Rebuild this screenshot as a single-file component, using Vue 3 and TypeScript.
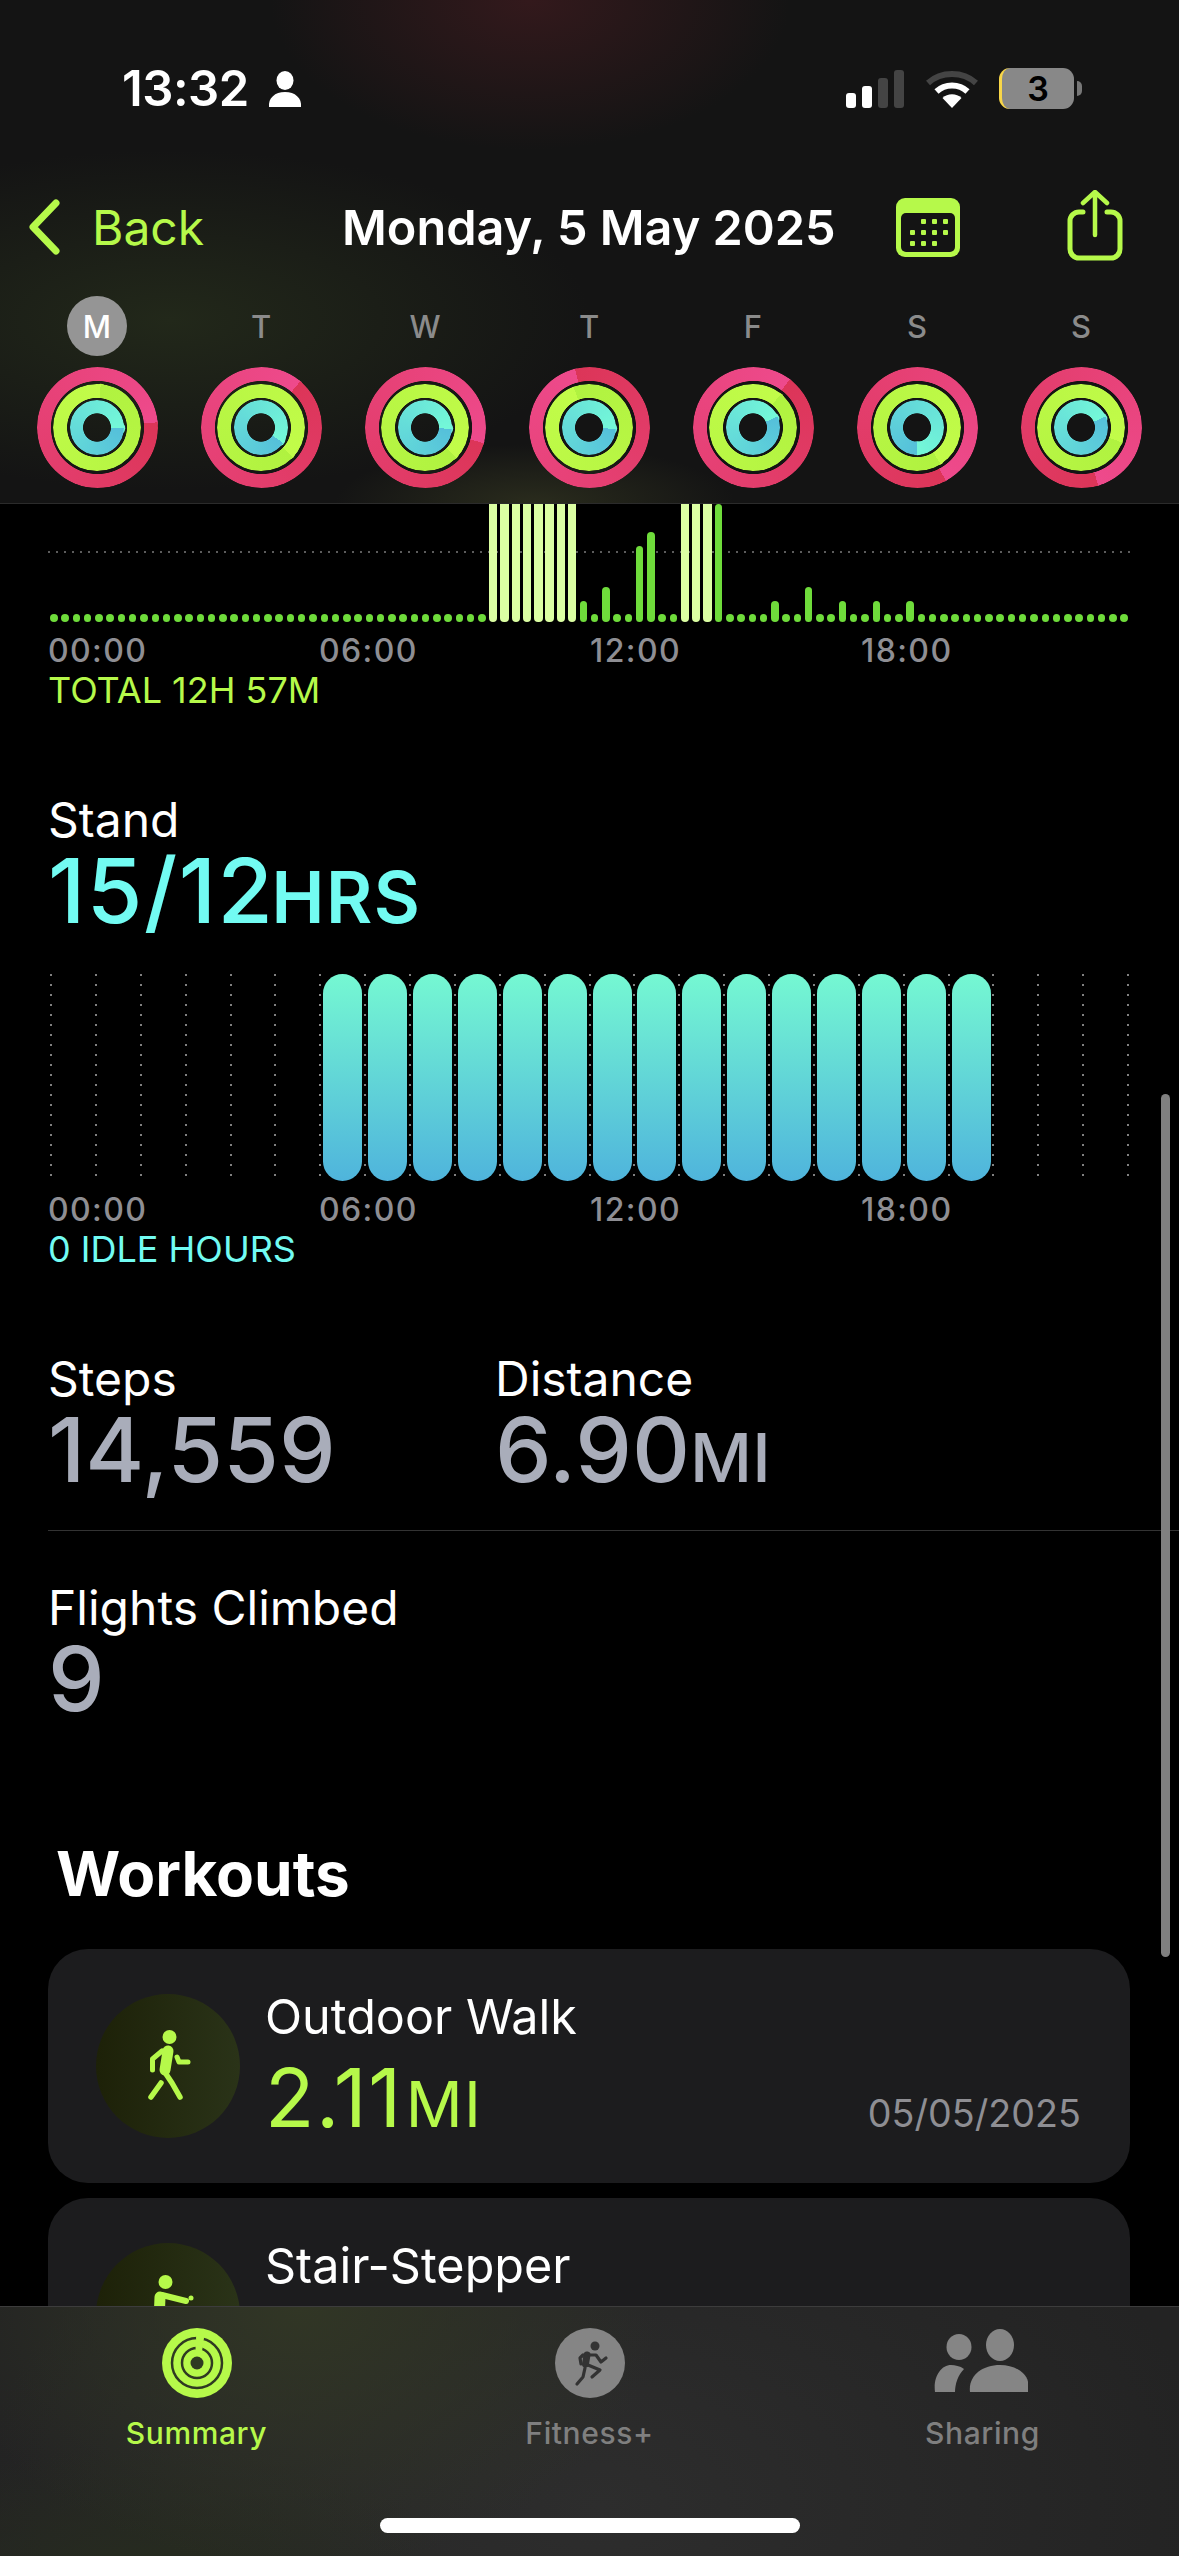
<template>
  <div class="phone">
    <header class="top">
      <div class="status">
        <span class="clock">13:32</span>
        <svg class="person" width="34" height="36" viewBox="0 0 34 36">
          <ellipse cx="17" cy="9.500" rx="8.500" ry="9.500" fill="#fff" />
          <path d="M1 36c-1-9 6-15 16-15s17 6 16 15z" fill="#fff" />
        </svg>
        <svg class="signal" width="58" height="38" viewBox="0 0 58 38">
          <rect x="0" y="23" width="10" height="15" rx="3" fill="#fff" />
          <rect x="16" y="16" width="10" height="22" rx="3" fill="#fff" />
          <rect x="32" y="8" width="10" height="30" rx="3" fill="#444" />
          <rect x="48" y="0" width="10" height="38" rx="3" fill="#444" />
        </svg>
        <svg class="wifi" width="52" height="38" viewBox="0 0 52 38">
          <path d="M2 13C15 1 37 1 50 13" fill="none" stroke="#444" stroke-width="6" />
          <path d="M10.500 21.500C19 13.500 33 13.500 41.500 21.500" fill="none" stroke="#fff" stroke-width="6" />
          <path d="M26 38l-9.500-10c5-5 14-5 19 0z" fill="#fff" />
        </svg>
        <div class="battery"><span>3</span></div>
        <span class="battery-tip"></span>
      </div>

      <nav class="nav">
        <div class="back">
          <svg width="32" height="56" viewBox="0 0 32 56">
            <path d="M28 4L5 28l23 24" fill="none" stroke="#b6f94a" stroke-width="7" stroke-linecap="round" stroke-linejoin="round" />
          </svg>
          <span>Back</span>
        </div>
        <div class="title">Monday, 5 May 2025</div>
        <svg class="calendar" width="64" height="59" viewBox="0 0 64 59">
          <rect width="64" height="59" rx="9" fill="#b6f94a" />
          <rect x="5" y="15" width="54" height="39" rx="5" fill="#141414" />
          <rect v-for="dot in calendarDots" :key="dot.x + '-' + dot.y" :x="dot.x" :y="dot.y" width="5" height="5" rx="1" fill="#b6f94a" />
        </svg>
        <svg class="share" width="58" height="72" viewBox="0 0 58 72">
          <path d="M17 22H13a9 9 0 0 0-9 9v28a9 9 0 0 0 9 9h32a9 9 0 0 0 9-9V31a9 9 0 0 0-9-9h-4" fill="none" stroke="#b6f94a" stroke-width="5" stroke-linecap="round" />
          <path d="M29 45V3M17 13L29 2l12 11" fill="none" stroke="#b6f94a" stroke-width="4.500" stroke-linecap="round" stroke-linejoin="round" />
        </svg>
      </nav>

      <div class="week">
        <div v-for="(day, i) in week" :key="i" class="day">
          <div class="letter" :class="{ current: i === 0 }">{{ day.letter }}</div>
          <div class="rings">
            <div class="band band-red" :style="{ background: sweep(day.red, '#dc3558', '#ee4a8c') }"></div>
            <div class="band band-green" :style="{ background: sweep(day.green, '#b0f240', '#c2fc49') }"></div>
            <div class="band band-cyan" :style="{ background: sweep(day.cyan, '#55c0da', '#74f8d8') }"></div>
            <svg class="caps" width="121" height="121" viewBox="-60.500 -60.500 121 121">
              <g v-for="cap in capsFor(day)" :key="cap.r">
                <circle :cx="cap.sx" :cy="cap.sy" r="7" fill="#000" opacity="0.22" />
                <circle :cx="cap.x" :cy="cap.y" r="7" :fill="cap.color" />
              </g>
            </svg>
          </div>
        </div>
      </div>
    </header>

    <main class="content">
      <span class="scrollbar"></span>

      <section class="move">
        <div class="minute-bars">
          <span
            v-for="(bar, i) in moveBars"
            :key="i"
            class="minute"
            :class="{ bright: bar.bright }"
            :style="{ height: bar.height + 'px' }"
          ></span>
        </div>
        <div class="hours">
          <span v-for="hour in hourLabels" :key="hour">{{ hour }}</span>
        </div>
        <div class="note lime">TOTAL 12H 57M</div>
      </section>

      <section class="stand">
        <div class="label">Stand</div>
        <div class="value cyan stand-value">15/12<small>HRS</small></div>
        <div class="stand-chart">
          <div v-for="n in 25" :key="n" class="slot">
            <span v-if="n >= 7 && n <= 21" class="hour-bar"></span>
          </div>
        </div>
        <div class="hours">
          <span v-for="hour in hourLabels" :key="hour">{{ hour }}</span>
        </div>
        <div class="note cyan">0 IDLE HOURS</div>
      </section>

      <section class="stats">
        <div class="stat-row">
          <div class="stat steps">
            <div class="label">Steps</div>
            <div class="value grey">14,559</div>
          </div>
          <div class="stat">
            <div class="label">Distance</div>
            <div class="value grey">6.90<small>MI</small></div>
          </div>
        </div>
        <div class="divider"></div>
        <div class="stat flights">
          <div class="label">Flights Climbed</div>
          <div class="value grey">9</div>
        </div>
      </section>

      <h2 class="workouts-title">Workouts</h2>

      <div class="card">
        <div class="badge">
          <svg width="144" height="144" viewBox="0 0 144 144">
            <circle cx="73.500" cy="43" r="7" fill="#b6f94a" />
            <path d="M72 57L69 76" stroke="#b6f94a" stroke-width="11" stroke-linecap="round" fill="none" />
            <path d="M66 57L56.500 65V76M81 63l2 5h9" stroke="#b6f94a" stroke-width="5" stroke-linecap="round" stroke-linejoin="round" fill="none" />
            <path d="M68 77L76 89L84 103M65 89L55 103" stroke="#b6f94a" stroke-width="5.500" stroke-linecap="round" stroke-linejoin="round" fill="none" />
          </svg>
        </div>
        <div class="card-text">
          <div class="card-title">Outdoor Walk</div>
          <div class="card-value">2.11<small>MI</small></div>
        </div>
        <div class="card-date">05/05/2025</div>
      </div>

      <div class="card">
        <div class="badge">
          <svg width="144" height="144" viewBox="0 0 144 144">
            <circle cx="69.500" cy="39" r="7" fill="#b6f94a" />
            <path d="M64 54L63 80" stroke="#b6f94a" stroke-width="11" stroke-linecap="round" fill="none" />
            <path d="M66 52L90 58" stroke="#b6f94a" stroke-width="6" stroke-linecap="round" fill="none" />
            <circle cx="95" cy="55" r="2.500" fill="#b6f94a" />
          </svg>
        </div>
        <div class="card-text">
          <div class="card-title">Stair-Stepper</div>
        </div>
      </div>
    </main>

    <footer class="tabs">
      <div class="tab active">
        <svg width="70" height="70" viewBox="0 0 70 70">
          <circle cx="35" cy="35" r="35" fill="#b6f94a" />
          <circle cx="35" cy="35" r="25" fill="none" stroke="#2f3a22" stroke-width="2.500" />
          <circle cx="35" cy="35" r="15" fill="none" stroke="#2f3a22" stroke-width="2.500" />
          <circle cx="35" cy="35" r="6.500" fill="#2f3a22" />
          <circle cx="38" cy="10" r="4" fill="#b6f94a" />
          <circle cx="37" cy="20" r="3.500" fill="#b6f94a" />
        </svg>
        <span>Summary</span>
      </div>
      <div class="tab">
        <svg width="70" height="70" viewBox="0 0 70 70">
          <circle cx="35" cy="35" r="35" fill="#858585" />
          <circle cx="40" cy="18" r="4.500" fill="#333" />
          <path d="M32 27L30.500 36" stroke="#333" stroke-width="7" stroke-linecap="round" fill="none" />
          <path d="M28 27l-3 3 1 6M35 27l6 0 5 7 5-4M33 37l12 5-8 7M30 40l-2 9-6 7" stroke="#333" stroke-width="3.200" stroke-linecap="round" stroke-linejoin="round" fill="none" />
        </svg>
        <span>Fitness+</span>
      </div>
      <div class="tab">
        <svg width="94" height="70" viewBox="0 0 94 70" class="sharing">
          <ellipse cx="25" cy="19" rx="12.500" ry="13" fill="#858585" />
          <ellipse cx="66" cy="17" rx="14" ry="16" fill="#858585" />
          <path d="M1 64c-2-15 6-27 16-27 4 0 9 1 13 4-6 6-9 15-9 23z" fill="#858585" />
          <path d="M36 64c-2-16 12-27 30-27s32 11 28 27z" fill="#858585" />
        </svg>
        <span>Sharing</span>
      </div>
      <span class="home-bar"></span>
    </footer>
  </div>
</template>

<script setup lang="ts">
interface Day {
  letter: string
  red: number
  green: number
  cyan: number
}

const week: Day[] = [
  { letter: 'M', red: 85, green: 5, cyan: 92 },
  { letter: 'T', red: 40, green: 133, cyan: 125 },
  { letter: 'W', red: 105, green: 134, cyan: 93 },
  { letter: 'T', red: 346, green: 339, cyan: 93 },
  { letter: 'F', red: 37, green: 40, cyan: 66 },
  { letter: 'S', red: 152, green: 147, cyan: 180 },
  { letter: 'S', red: 164, green: 110, cyan: 66 }
]

const hourLabels = ['00:00', '06:00', '12:00', '18:00']

const calendarDots = [
  { x: 25, y: 21 }, { x: 36, y: 21 }, { x: 47, y: 21 },
  { x: 14, y: 32 }, { x: 25, y: 32 }, { x: 36, y: 32 }, { x: 47, y: 32 },
  { x: 14, y: 43 }, { x: 25, y: 43 }, { x: 36, y: 43 }
]

const sweep = (angle: number, dark: string, bright: string) =>
  `conic-gradient(from ${angle}deg, ${dark}, ${bright})`

const capsFor = (day: Day) => {
  const list = [
    { r: 53.6, angle: day.red, color: '#ee4a8c' },
    { r: 36.8, angle: day.green, color: '#c2fc49' },
    { r: 20.7, angle: day.cyan, color: '#74f8d8' }
  ]
  return list.map(({ r, angle, color }) => {
    const rad = (angle * Math.PI) / 180
    const after = ((angle + 180 / r) * Math.PI) / 180
    return {
      r,
      color,
      x: r * Math.sin(rad),
      y: -r * Math.cos(rad),
      sx: r * Math.sin(after),
      sy: -r * Math.cos(after)
    }
  })
}

const tallBars: Record<number, number> = {
  47: 21, 49: 35, 52: 76, 53: 90, 59: 118, 64: 21, 67: 35, 70: 21, 73: 21, 76: 21
}
const brightBars = [39, 40, 41, 42, 43, 44, 45, 46, 56, 57, 58]

const moveBars = Array.from({ length: 96 }, (_, i) => {
  const bright = brightBars.includes(i)
  return { bright, height: bright ? 118 : tallBars[i] ?? 8 }
})
</script>

<style scoped>
.phone {
  width: 1179px;
  height: 2556px;
  display: flex;
  flex-direction: column;
  overflow: hidden;
  background: #000;
  color: #fff;
  font-family: Inter, "Liberation Sans", sans-serif;
}

.top {
  flex: none;
  height: 504px;
  box-sizing: border-box;
  padding-top: 60px;
  border-bottom: 1px solid #2b2b2b;
  background:
    radial-gradient(ellipse 260px 150px at 530px 0, #33191c, transparent),
    radial-gradient(ellipse 420px 170px at 170px 320px, #22281a, transparent),
    radial-gradient(ellipse 200px 60px at 535px 504px, #2a2c1d, transparent),
    #141414;
}

.status {
  height: 56px;
  display: flex;
  align-items: center;
  padding-left: 122px;
}

.clock {
  font-size: 49px;
  font-weight: 600;
  letter-spacing: -0.5px;
  width: 146px;
}

.signal {
  margin-left: 544px;
  margin-top: 1px;
}

.person {
  margin-top: 2px;
}

.wifi {
  margin-left: 22px;
  margin-top: 1px;
}

.battery {
  margin-left: 21px;
  width: 75px;
  height: 41px;
  box-sizing: border-box;
  border-radius: 11px;
  border-left: 3px solid #f8d648;
  background: #888;
  display: flex;
  align-items: center;
  justify-content: center;
  color: #000;
  font-size: 34px;
  font-weight: 600;
}

.battery-tip {
  width: 5px;
  height: 15px;
  margin-left: 3px;
  border-radius: 0 5px 5px 0;
  background: #777;
}

.nav {
  margin-top: 61px;
  height: 100px;
  display: grid;
  grid-template-columns: 342px 554px 170px 1fr;
  align-items: center;
}

.back {
  display: flex;
  align-items: center;
  gap: 32px;
  padding-left: 28px;
  color: #b6f94a;
  font-size: 48px;
}

.title {
  font-size: 48.600px;
  font-weight: 600;
  white-space: nowrap;
}

.share {
  margin-top: -2px;
}

.week {
  margin-top: 19px;
  padding-left: 15px;
  display: grid;
  grid-template-columns: repeat(7, 164px);
}

.day {
  display: flex;
  flex-direction: column;
  align-items: center;
}

.letter {
  width: 60px;
  height: 60px;
  margin-bottom: 11px;
  border-radius: 50%;
  display: flex;
  align-items: center;
  justify-content: center;
  font-size: 31px;
  font-weight: 500;
  color: #8b8b8b;
}

.letter.current {
  background: #959595;
  color: #fff;
}

.rings {
  width: 121px;
  height: 121px;
  display: grid;
  place-items: center;
}

.rings > * {
  grid-area: 1 / 1;
}

.band {
  border-radius: 50%;
}

.band-red {
  width: 121px;
  height: 121px;
  -webkit-mask: radial-gradient(closest-side, transparent 46.2px, #000 46.9px);
  mask: radial-gradient(closest-side, transparent 46.2px, #000 46.9px);
}

.band-green {
  width: 87.5px;
  height: 87.5px;
  -webkit-mask: radial-gradient(closest-side, transparent 29.6px, #000 30.3px);
  mask: radial-gradient(closest-side, transparent 29.6px, #000 30.3px);
}

.band-cyan {
  width: 54.6px;
  height: 54.6px;
  -webkit-mask: radial-gradient(closest-side, transparent 13.6px, #000 14.3px);
  mask: radial-gradient(closest-side, transparent 13.6px, #000 14.3px);
}

.content {
  flex: 1;
  min-height: 0;
  position: relative;
  overflow: hidden;
  padding-left: 48px;
}

.scrollbar {
  position: absolute;
  left: 1161px;
  top: 590px;
  width: 9px;
  height: 863px;
  border-radius: 5px;
  background: #808080;
}

.minute-bars {
  width: 1082px;
  height: 118px;
  display: grid;
  grid-template-columns: repeat(96, 11.270px);
  justify-content: center;
  justify-items: center;
  align-items: end;
  overflow: hidden;
  background: linear-gradient(to right, #5c5c5c 2px, transparent 2px) 0 47px / 8px 2px repeat-x;
}

.minute {
  width: 7.500px;
  border-radius: 4px;
  background: #6fdc3b;
}

.minute.bright {
  width: 8.500px;
  background: #dcffa3;
  border-radius: 0 0 4px 4px;
}

.hours {
  width: 1084px;
  height: 40px;
  margin-top: 8px;
  display: grid;
  grid-template-columns: repeat(4, 271px);
  align-items: center;
  font-size: 32px;
  font-weight: 500;
  letter-spacing: 1.400px;
  color: #8e8e93;
}

.note {
  height: 40px;
  line-height: 40px;
  font-size: 36px;
}

.lime {
  color: #b6f94a;
}

.cyan {
  color: #72fbf2;
}

.grey {
  color: #a9adba;
}

.label {
  height: 58px;
  line-height: 58px;
  font-size: 48px;
}

.value {
  height: 84px;
  line-height: 84px;
  font-size: 90px;
  font-weight: 500;
  white-space: nowrap;
}

.value small {
  font-size: 68px;
}

.stand {
  margin-top: 81px;
}

.stand-value {
  letter-spacing: 1.500px;
}

.stand-value small {
  margin-left: -3px;
  font-size: 71px;
  font-weight: 600;
  letter-spacing: 1.500px;
}

.stand-chart {
  margin-top: 41px;
  height: 207px;
  display: flex;
  padding-left: 2px;
}

.slot {
  flex: 0 0 44.875px;
  height: 207px;
  padding-left: 4px;
  box-sizing: border-box;
  background: linear-gradient(#808080 2px, transparent 2px) 0 0 / 2px 10px repeat-y;
}

.slot:last-child {
  flex-basis: 3px;
}

.hour-bar {
  display: block;
  width: 39px;
  height: 207px;
  border-radius: 20px;
  background: linear-gradient(#75f8d2, #4fb4dc);
}

.stats {
  margin-top: 81px;
}

.stat-row {
  display: flex;
}

.steps {
  width: 447px;
}

.divider {
  height: 1px;
  margin-top: 38px;
  background: #333;
}

.flights {
  margin-top: 48px;
}

.workouts-title {
  margin: 115px 0 0 8px;
  height: 76px;
  line-height: 76px;
  font-size: 62px;
  font-weight: 700;
}

.card {
  width: 1082px;
  height: 234px;
  margin-top: 37px;
  box-sizing: border-box;
  padding: 45px 49px 0 48px;
  border-radius: 40px;
  background: #1c1c1e;
  display: flex;
}

.card + .card {
  margin-top: 15px;
}

.badge {
  flex: none;
  width: 144px;
  height: 144px;
  border-radius: 50%;
  background: linear-gradient(90deg, #1d2108, #2a3318);
}

.badge svg {
  display: block;
}

.card-text {
  margin-left: 25px;
  margin-top: -7px;
}

.card-title {
  height: 60px;
  line-height: 60px;
  font-size: 48.500px;
}

.card-value {
  height: 84px;
  margin-top: 9px;
  line-height: 84px;
  font-size: 81px;
  letter-spacing: 1.500px;
  color: #b6f94a;
}

.card-value small {
  margin-left: 3px;
  font-size: 63px;
}

.card-date {
  margin-left: auto;
  margin-top: 95px;
  height: 48px;
  line-height: 48px;
  font-size: 37.700px;
  color: #8e8e93;
}

.tabs {
  flex: none;
  height: 250px;
  box-sizing: border-box;
  position: relative;
  border-top: 1px solid #3c3c3c;
  padding-top: 21px;
  display: grid;
  grid-template-columns: repeat(3, 1fr);
  align-items: start;
  background:
    radial-gradient(ellipse 360px 260px at 300px 0, #313625, transparent),
    radial-gradient(ellipse 300px 120px at 150px 260px, #262b1f, transparent),
    radial-gradient(ellipse 620px 400px at 600px 200px, #2d2d2d, #232323);
}

.tab {
  display: flex;
  flex-direction: column;
  align-items: center;
  font-size: 30px;
  font-weight: 500;
  color: #7f7f7f;
}

.tab svg {
  display: block;
}

.tab span {
  margin-top: 17px;
  letter-spacing: 0.600px;
}

.tab.active {
  color: #b6f94a;
}

.sharing {
  margin-left: -3px;
}

.home-bar {
  position: absolute;
  left: 380px;
  top: 211px;
  width: 420px;
  height: 15px;
  border-radius: 8px;
  background: #fff;
}
</style>

<style>
html,
body {
  background: #000;
}
</style>
